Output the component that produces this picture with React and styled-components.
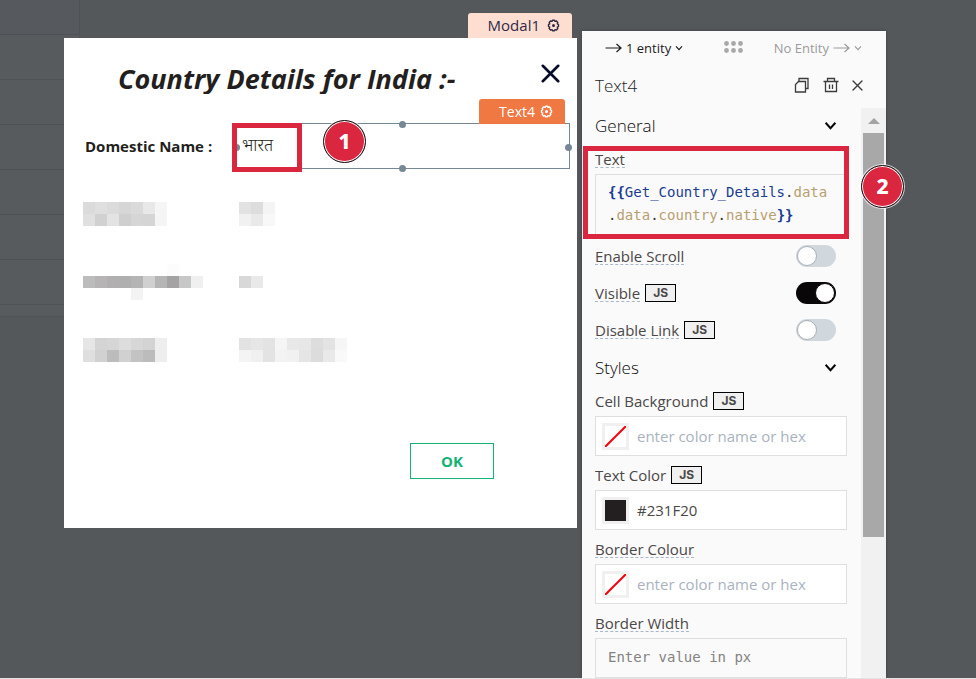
import React from "react";
import styled, { createGlobalStyle, css } from "styled-components";

const sans = `"Open Sans", "Noto Sans", sans-serif`;
const mono = `"DejaVu Sans Mono", "Liberation Mono", monospace`;

const GlobalStyle = createGlobalStyle`
  *, *::before, *::after { box-sizing: border-box; }
  body { margin: 0; font-family: ${sans}; color: #4b4848; background: #54585b; }
  button, input { font: inherit; color: inherit; margin: 0; }
  button { padding: 0; border: 0; background: none; cursor: pointer; }
  svg { display: block; flex: none; }
  h1, h2, p { margin: 0; }
`;

const Page = styled.div`
  display: grid;
  grid-template: minmax(0, 1fr) / minmax(0, 1fr);
  height: 100vh;
  overflow: hidden;
  border-bottom: 1px solid #e4e4e4;
`;

const BackTable = styled.div`
  grid-area: 1 / 1;
  justify-self: start;
  align-self: start;
  width: 80px;
  border-right: 1px solid #4f5356;
`;

const BackRow = styled.div`
  height: ${(p) => p.$height}px;
  border-bottom: 1px solid #4e5255;
  background: ${(p) => (p.$head ? "#56595e" : "#575b5e")};
`;

const Workspace = styled.div`
  grid-area: 1 / 1;
  display: grid;
  grid-template-columns: minmax(0, 64px) minmax(0, 1fr) 304px minmax(0, 90px);
  grid-template-rows: minmax(0, 1fr);
  min-height: 0;
`;

const ModalColumn = styled.div`
  grid-column: 2;
  padding: 13px 5px 0 0;
  display: flex;
  flex-direction: column;
  align-items: flex-end;
`;

const Tag = styled.button`
  display: flex;
  align-items: center;
  justify-content: flex-end;
  gap: ${(p) => (p.$selected ? 5 : 7)}px;
  height: 25px;
  padding: 0 12px 1px 20px;
  border-radius: 3px 3px 0 0;
  font-size: ${(p) => (p.$selected ? 14 : 15)}px;
  color: ${(p) => (p.$selected ? "#fff" : "#2f2a45")};
  background: ${(p) => (p.$selected ? "#f07843" : "#ffded2")};
`;

const ModalTag = styled.div`
  padding-right: 5px;
`;

const Dialog = styled.section`
  align-self: stretch;
  padding: 25px 7px 49px 19px;
  background: #fff;
`;

const DialogHeader = styled.header`
  display: flex;
  align-items: flex-start;
  justify-content: space-between;
  height: 60px;
  padding: 0 10px 0 35px;
`;

const DialogTitle = styled.h1`
  height: 31px;
  overflow: hidden;
  white-space: nowrap;
  font-size: 27px;
  line-height: 31px;
  font-weight: 700;
  font-style: italic;
  color: #231f20;
`;

const CloseButton = styled.button`
  padding-top: 1px;
  color: #060b2a;
`;

const Details = styled.div`
  display: grid;
  row-gap: 23px;
`;

const DetailRow = styled.div`
  display: grid;
  grid-template-columns: 153px minmax(0, 1fr);
  height: 45px;
  align-items: center;
`;

const DetailLabel = styled.p`
  padding-left: 2px;
  font-size: 15px;
  font-weight: 700;
  color: #231f20;
`;

const DetailValue = styled.div`
  padding-left: 3px;
`;

const Selection = styled.div`
  position: relative;
  display: flex;
  align-items: center;
  height: 46px;
  padding: 0 0 4px 5px;
  border: 1px solid #768896;
  font-size: 17px;
  font-weight: 300;
  color: #231f20;
`;

const SelectionTag = styled.div`
  position: absolute;
  right: 4px;
  bottom: 100%;
  font-weight: 400;
`;

const Handle = styled.span`
  position: absolute;
  width: 7px;
  height: 7px;
  margin: -4px;
  border-radius: 50%;
  background: #768896;
  ${(p) => p.$side === "top" && css`left: 50%; top: 1px;`}
  ${(p) => p.$side === "bottom" && css`left: 50%; top: 100%; margin-top: -3px;`}
  ${(p) => p.$side === "left" && css`left: 0; top: 55%;`}
  ${(p) => p.$side === "right" && css`left: 100%; top: 55%;`}
`;

const Frame = styled.span`
  position: absolute;
  border: 5px solid #da273f;
  pointer-events: none;
  ${(p) =>
    p.$target === "value"
      ? css`left: -5px; top: -1px; width: 70px; height: 49px;`
      : css`left: -12px; right: -2px; top: 2px; bottom: -4px;`}
`;

const Step = styled.span`
  position: absolute;
  display: flex;
  align-items: center;
  justify-content: center;
  width: 43px;
  height: 43px;
  border: 1px solid #15151a;
  border-radius: 50%;
  box-shadow: inset 0 0 0 1px #fff, 0 0 0 1px rgba(255, 255, 255, 0.7);
  background: #da273f;
  color: #fff;
  font-family: "Noto Sans", sans-serif;
  font-size: 21px;
  line-height: 1;
  font-weight: 800;
  ${(p) =>
    p.$target === "value"
      ? css`left: 86px; top: -4px;`
      : css`right: -57px; top: 21px;`}
`;

const Mosaic = styled.div`
  display: grid;
  grid-template-columns: repeat(${(p) => p.$columns}, 12px);
  grid-auto-rows: 12px;
`;

const MosaicCell = styled.span`
  background: ${(p) => p.$shade};
`;

const DialogFooter = styled.footer`
  display: flex;
  justify-content: flex-end;
  padding: 71px 76px 0 0;
`;

const OkButton = styled.button`
  width: 84px;
  height: 36px;
  border: 1px solid #12b375;
  background: #fff;
  color: #12b375;
  font-size: 15px;
  font-weight: 700;
`;

const Panel = styled.aside`
  grid-column: 3;
  display: flex;
  flex-direction: column;
  min-height: 0;
  margin-top: 31px;
  background: #fafafa;
  box-shadow: 0 0 3px rgba(20, 24, 28, 0.4);
`;

const EntityBar = styled.div`
  display: grid;
  grid-template-columns: 1fr auto 1fr;
  align-items: center;
  height: 33px;
  padding: 0 24px 0 23px;
`;

const EntityButton = styled.button`
  display: flex;
  align-items: center;
  justify-self: ${(p) => (p.$muted ? "end" : "start")};
  gap: 4px;
  font-size: 13px;
  color: ${(p) => (p.$muted ? "#9b9b9b" : "#1c1c1c")};
`;

const TitleRow = styled.div`
  display: flex;
  align-items: center;
  height: 44px;
  padding: 0 23px 2px 13px;
`;

const PanelTitle = styled.h2`
  flex: 1;
  font-size: 17px;
  font-weight: 350;
  color: #1f1f1f;
`;

const Actions = styled.div`
  display: flex;
  align-items: center;
  gap: 13px;
`;

const IconButton = styled.button`
  color: #3c3c3c;
`;

const PanelBody = styled.div`
  flex: 1;
  display: grid;
  grid-template-columns: minmax(0, 1fr) 25px;
  min-height: 0;
`;

const Properties = styled.div`
  min-height: 0;
  padding: 0 14px 0 13px;
`;

const SectionHeader = styled.button`
  display: flex;
  align-items: center;
  justify-content: space-between;
  width: 100%;
  height: 36px;
  padding: 0 10px 2px 0;
  margin-top: ${(p) => (p.$spaced ? 2 : 0)}px;
  font-size: 17px;
  font-weight: 350;
  color: #090707;
`;

const Field = styled.div`
  position: relative;
  display: grid;
  row-gap: 5px;
  padding-top: 5px;
  margin-bottom: ${(p) => (p.$tight ? 2 : 4)}px;
`;

const LabelRow = styled.div`
  display: flex;
  align-items: center;
  gap: 5px;
  height: 20px;
`;

const Label = styled.label`
  height: 18px;
  line-height: 18px;
  font-size: 15px;
  color: #4b4848;
  white-space: nowrap;
  border-bottom: 1px ${(p) => (p.$hint ? "dashed #a9b8c8" : "solid transparent")};
`;

const JsButton = styled.button`
  width: 31px;
  height: 18px;
  border: 1px solid #000;
  background: #f0f0f0;
  color: #4b4848;
  font-family: Inter, "Liberation Sans", sans-serif;
  font-size: 12px;
  line-height: 16px;
  font-weight: 700;
`;

const Editor = styled.div`
  height: 61px;
  padding: 6px 12px;
  border: 1px solid #e0dede;
  border-bottom: 0;
  font-family: ${mono};
  font-size: 14px;
  line-height: 23px;
  white-space: pre;
  outline: none;
`;

const Token = styled.span`
  color: ${(p) => ({ name: "#1a3d92", brace: "#1a3d92", prop: "#b8a06e", dot: "#333" })[p.$kind]};
  font-weight: ${(p) => (p.$kind === "brace" ? 700 : 400)};
`;

const Switches = styled.div`
  display: grid;
  grid-auto-rows: 37px;
`;

const SwitchRow = styled.div`
  display: flex;
  align-items: center;
  gap: 5px;
  padding-right: 11px;
`;

const Switch = styled.input.attrs({ type: "checkbox", role: "switch" })`
  appearance: none;
  position: relative;
  width: 40px;
  height: 22px;
  margin-left: auto;
  border-radius: 11px;
  background: #d0d7dd;
  &::before {
    content: "";
    position: absolute;
    left: 1px;
    top: 1px;
    width: 20px;
    height: 20px;
    border: 1px solid #a9b0b6;
    border-radius: 50%;
    background: #fff;
  }
  &:checked { background: #090707; }
  &:checked::before { left: 19px; border-color: #090707; }
`;

const ColorBox = styled.div`
  display: flex;
  align-items: center;
  gap: 8px;
  height: 40px;
  padding: 0 6px;
  border: 1px solid #e0dede;
  background: #fff;
`;

const Swatch = styled.button`
  flex: none;
  width: 27px;
  height: 27px;
  border: 3px solid #f0f0f0;
  background: ${(p) => p.$color || "#fff"};
`;

const ColorInput = styled.input`
  flex: 1;
  min-width: 0;
  padding: 0;
  border: 0;
  outline: none;
  background: none;
  font-size: 15px;
  color: #4b4848;
  &::placeholder { color: #a9b3be; opacity: 1; }
`;

const CodeInput = styled.input`
  width: 100%;
  height: 40px;
  padding: 0 12px 2px;
  border: 1px solid #e0dede;
  background: #fafafa;
  && { font-family: ${mono}; font-size: 14px; }
  &::placeholder { color: #858282; opacity: 1; }
`;

const Scrollbar = styled.div`
  display: flex;
  flex-direction: column;
  align-items: center;
  padding: 10px 2px 0;
  background: #f1f1f1;
`;

const Thumb = styled.div`
  width: 21px;
  height: 404px;
  margin-top: 9px;
  background: #a8a8a8;
`;

const Gear = () => (
  <svg width="13" height="13" viewBox="0 0 13 13" fill="none" stroke="currentColor" strokeLinejoin="round">
    <path
      strokeWidth="1.400"
      d="M5.500 1.200h2l.5 1.200 1.500-.400 1.300 1.500-.500 1.300 1.200.700v2l-1.200.700.500 1.300-1.300 1.500-1.500-.400-.5 1.200h-2l-.5-1.200-1.500.400-1.300-1.500.500-1.300L1.500 7.500v-2l1.200-.700-.500-1.300L3.500 2l1.500.400z"
    />
    <circle cx="6.500" cy="6.500" r="1.500" fill="currentColor" stroke="none" />
  </svg>
);

const LongArrow = () => (
  <svg width="17" height="10" viewBox="0 0 17 10" fill="none" stroke="currentColor" strokeWidth="1.200">
    <path d="M0.500 5H16M11.500 1L16 5l-4.500 4" />
  </svg>
);

const Chevron = ({ size = 8, weight = 1.2 }) => (
  <svg width={size} height={size} viewBox="0 0 12 12" fill="none" stroke="currentColor" strokeWidth={(weight * 12) / size}>
    <path d="M1.500 3.500L6 8.500l4.500-5" />
  </svg>
);

const Dots = () => (
  <svg width="19" height="14" viewBox="0 0 19 14" fill="#a9a7a7">
    {[2.5, 9.5, 16.5].map((x) =>
      [2.5, 9.5].map((y) => <circle key={`${x}-${y}`} cx={x} cy={y} r="2.400" />)
    )}
  </svg>
);

const CopyIcon = () => (
  <svg width="16" height="16" viewBox="0 0 16 16" fill="none" stroke="currentColor" strokeWidth="1.300">
    <path d="M5 4V1.500h9v10h-2.500" />
    <path d="M4.500 4.500H11.500v10.500H1.500V7.500z" />
  </svg>
);

const TrashIcon = () => (
  <svg width="16" height="16" viewBox="0 0 16 16" fill="none" stroke="currentColor" strokeWidth="1.300">
    <path d="M0.500 4.500H15.500M4.500 4.500V1.500H11.500V4.500M2.500 4.500V14.500H13.500V4.500M6.500 7.500V12M9.500 7.500V12" />
  </svg>
);

const Cross = ({ size, weight }) => (
  <svg width={size} height={size} viewBox="0 0 16 16" fill="none" stroke="currentColor" strokeWidth={weight} strokeLinecap="round">
    <path d="M1.500 1.500L14.500 14.500M14.500 1.500L1.500 14.500" />
  </svg>
);

const NoColor = () => (
  <svg width="21" height="21" viewBox="0 0 21 21" stroke="#f8000c" strokeWidth="2">
    <path d="M0 21L21 0" />
  </svg>
);

const UpTriangle = () => (
  <svg width="12" height="6" viewBox="0 0 12 6" fill="#a3a3a3">
    <path d="M0 6L6 0l6 6z" />
  </svg>
);

const hidden = [
  {
    label: ["dbdbdb dfdfdf dbdbdb d6d6d6 dadada e8e8e8 f5f5f5", "e0e0e0 d1d1d1 e3e3e3 cfcfcf d6d6d6 d5d5d5 f5f5f5"],
    value: ["e2e2e2 dddddd f4f4f4", "f1f1f1 e9e9e9 f8f8f8"],
  },
  {
    label: [
      "ffffff ffffff ffffff ffffff ffffff ffffff ffffff fcfcfc ffffff ffffff",
      "bcbcbc b7b4b5 b2afb0 afafaf b4b4b4 d0d0d0 b5b5b5 a5a2a3 c7c7c7 f0f0f0",
      "ffffff ffffff ffffff ffffff f3f3f3 ffffff ffffff ffffff ffffff ffffff",
    ],
    value: ["d8d8d8 e9e9e9"],
  },
  {
    label: ["e6e6e6 d4d4d4 d6d6d6 dddddd d7d7d7 d3d3d3 eeeeee", "dfdfdf d1d1d1 bcbcbc d1d1d1 c3c3c3 bcbcbc eeeeee"],
    value: [
      "e2e2e2 e6e6e6 e3e3e3 f5f5f5 e8e8e8 e7e7e7 dddddd e3e3e3 f6f6f6",
      "f4f4f4 f0f0f0 e3e3e3 f3f3f3 f1f1f1 e5e5e5 dcdcdc e9e9e9 f9f9f9",
    ],
  },
];

const Redacted = ({ rows }) => {
  const cells = rows.map((row) => row.split(" "));
  return (
    <Mosaic $columns={cells[0].length}>
      {cells.flat().map((shade, i) => (
        <MosaicCell key={i} $shade={`#${shade}`} />
      ))}
    </Mosaic>
  );
};

const ColorField = ({ id, label, hint, js, color }) => (
  <Field>
    <LabelRow>
      <Label htmlFor={id} $hint={hint}>{label}</Label>
      {js && <JsButton>JS</JsButton>}
    </LabelRow>
    <ColorBox>
      <Swatch $color={color} aria-label={`Pick ${label}`}>{!color && <NoColor />}</Swatch>
      <ColorInput id={id} placeholder="enter color name or hex" defaultValue={color} />
    </ColorBox>
  </Field>
);

const SwitchField = ({ id, label, js, on }) => (
  <SwitchRow>
    <Label htmlFor={id} $hint>{label}</Label>
    {js && <JsButton>JS</JsButton>}
    <Switch id={id} defaultChecked={on} />
  </SwitchRow>
);

export default function App() {
  return (
    <>
      <GlobalStyle />
      <Page>
        <BackTable>
          <BackRow $height={35} $head />
          {[45, 45, 45, 45, 45, 45, 12].map((height, i) => (
            <BackRow key={i} $height={height} />
          ))}
        </BackTable>
        <Workspace>
          <ModalColumn>
            <ModalTag>
              <Tag>Modal1 <Gear /></Tag>
            </ModalTag>
            <Dialog>
              <DialogHeader>
                <DialogTitle>Country Details for India :-</DialogTitle>
                <CloseButton aria-label="Close"><Cross size={19} weight={2.2} /></CloseButton>
              </DialogHeader>
              <Details>
                <DetailRow>
                  <DetailLabel>Domestic Name :</DetailLabel>
                  <Selection>
                    <SelectionTag>
                      <Tag $selected>Text4 <Gear /></Tag>
                    </SelectionTag>
                    <span lang="hi">भारत</span>
                    {["top", "bottom", "left", "right"].map((side) => (
                      <Handle key={side} $side={side} />
                    ))}
                    <Frame $target="value" />
                    <Step $target="value">1</Step>
                  </Selection>
                </DetailRow>
                {hidden.map((row, i) => (
                  <DetailRow key={i}>
                    <Redacted rows={row.label} />
                    <DetailValue><Redacted rows={row.value} /></DetailValue>
                  </DetailRow>
                ))}
              </Details>
              <DialogFooter>
                <OkButton>OK</OkButton>
              </DialogFooter>
            </Dialog>
          </ModalColumn>
          <Panel>
            <EntityBar>
              <EntityButton><LongArrow />1 entity<Chevron /></EntityButton>
              <Dots />
              <EntityButton $muted>No Entity<LongArrow /><Chevron /></EntityButton>
            </EntityBar>
            <TitleRow>
              <PanelTitle>Text4</PanelTitle>
              <Actions>
                <IconButton aria-label="Copy"><CopyIcon /></IconButton>
                <IconButton aria-label="Delete"><TrashIcon /></IconButton>
                <IconButton aria-label="Close panel"><Cross size={11} weight={2} /></IconButton>
              </Actions>
            </TitleRow>
            <PanelBody>
              <Properties>
                <SectionHeader>General<Chevron size={13} weight={2} /></SectionHeader>
                <Field $tight>
                  <LabelRow><Label as="span" id="text-label" $hint>Text</Label></LabelRow>
                  <Editor role="textbox" aria-labelledby="text-label" aria-multiline="true" contentEditable suppressContentEditableWarning spellCheck={false}>
                    <Token $kind="brace">{"{{"}</Token>
                    <Token $kind="name">Get_Country_Details</Token>
                    <Token $kind="dot">.</Token>
                    <Token $kind="prop">data</Token>
                    <br />
                    <Token $kind="dot">.</Token>
                    <Token $kind="prop">data</Token>
                    <Token $kind="dot">.</Token>
                    <Token $kind="prop">country</Token>
                    <Token $kind="dot">.</Token>
                    <Token $kind="prop">native</Token>
                    <Token $kind="brace">{"}}"}</Token>
                  </Editor>
                  <Frame $target="field" />
                  <Step $target="field">2</Step>
                </Field>
                <Switches>
                  <SwitchField id="scroll" label="Enable Scroll" />
                  <SwitchField id="visible" label="Visible" js on />
                  <SwitchField id="link" label="Disable Link" js />
                </Switches>
                <SectionHeader $spaced>Styles<Chevron size={13} weight={2} /></SectionHeader>
                <ColorField id="cell-bg" label="Cell Background" js />
                <ColorField id="text-color" label="Text Color" js color="#231F20" />
                <ColorField id="border-color" label="Border Colour" hint />
                <Field>
                  <LabelRow><Label htmlFor="border-width" $hint>Border Width</Label></LabelRow>
                  <CodeInput id="border-width" placeholder="Enter value in px" />
                </Field>
              </Properties>
              <Scrollbar>
                <UpTriangle />
                <Thumb />
              </Scrollbar>
            </PanelBody>
          </Panel>
        </Workspace>
      </Page>
    </>
  );
}
